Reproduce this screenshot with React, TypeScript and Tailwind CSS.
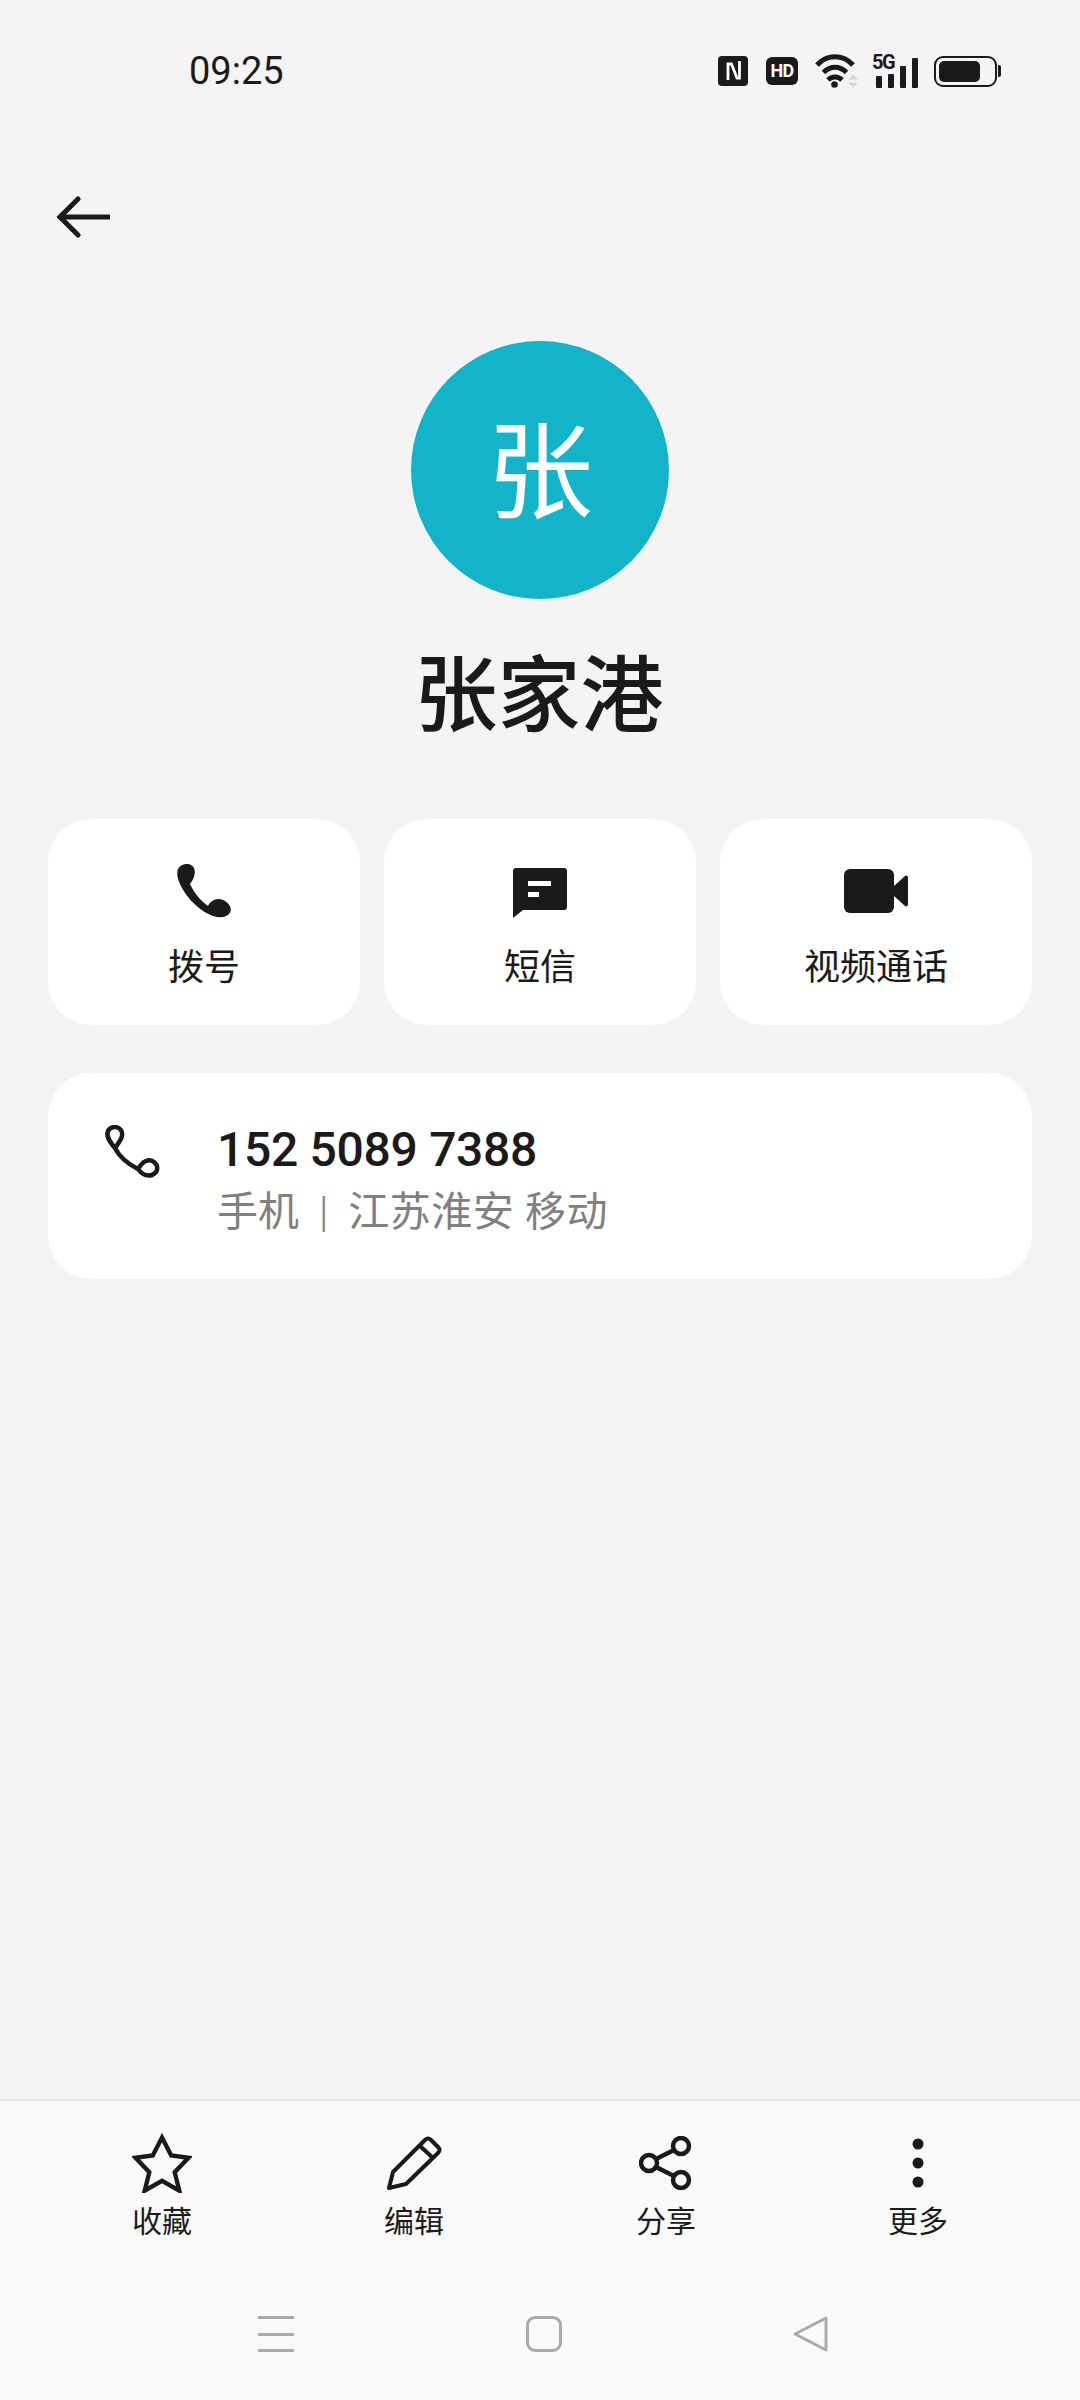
import React from "react";

const font = { fontFamily: 'Roboto, "Noto Sans CJK SC", sans-serif' };

function StatusIcons() {
  return (
    <div className="flex items-center">
      {/* NFC */}
      <svg width="30" height="30" viewBox="0 0 30 30">
        <rect width="30" height="30" rx="4" fill="#1a1a1a" />
        <path d="M10 24V8h3.500l5.500 14h2.500V5" fill="none" stroke="#fff" strokeWidth="2.800" />
      </svg>
      {/* HD */}
      <div className="ml-[18px] flex h-[28px] w-[32px] items-center justify-center rounded-[6px] bg-[#1a1a1a] text-[18px] font-bold leading-none tracking-[-0.8px] text-white">
        HD
      </div>
      {/* wifi */}
      <svg width="44" height="35" viewBox="0 0 44 35" className="ml-[16px]">
        <path d="M3 11c10-11 26-11 36 0" fill="none" stroke="#1a1a1a" strokeWidth="5" />
        <path d="M9.500 18.500c7-7 16-7 23 0" fill="none" stroke="#1a1a1a" strokeWidth="5" />
        <path d="M14 26c4-4 10-4 14 0" fill="none" stroke="#1a1a1a" strokeWidth="5" />
        <circle cx="20.500" cy="30.500" r="3.300" fill="#1a1a1a" />
        <path d="M39 20l5 5.500H34zM39 34l5-5.500H34z" fill="#d8d8d8" />
      </svg>
      {/* 5G + signal */}
      <div className="relative ml-[14px] h-[34px] w-[47px]">
        <span className="absolute left-0 top-[-2px] text-[20px] font-bold leading-[20px] tracking-[-1.500px] text-[#1a1a1a]">
          5G
        </span>
        <div className="absolute bottom-0 left-[4px] flex items-end gap-[6px]">
          <div className="h-[12px] w-[6px] rounded-[1px] bg-[#1a1a1a]" />
          <div className="h-[14px] w-[6px] rounded-[1px] bg-[#1a1a1a]" />
          <div className="h-[22px] w-[6px] rounded-[1px] bg-[#1a1a1a]" />
          <div className="h-[30px] w-[6px] rounded-[1px] bg-[#1a1a1a]" />
        </div>
      </div>
      {/* battery */}
      <div className="ml-[15px] flex items-center">
        <div className="h-[31px] w-[63px] rounded-[9px] border-[2.5px] border-[#1a1a1a] p-[3px]">
          <div className="h-full w-[41px] rounded-[5px] bg-[#1a1a1a]" />
        </div>
        <div className="ml-[1px] h-[12px] w-[3px] rounded-r-[2px] bg-[#1a1a1a]" />
      </div>
    </div>
  );
}

function QuickAction({ icon, label }: { icon: React.ReactNode; label: string }) {
  return (
    <div className="flex h-[206px] flex-col items-center rounded-[44px] bg-white">
      <div className="mt-[44px] flex h-[56px] items-center justify-center">{icon}</div>
      <div className="mt-[28px] text-[36px] leading-[42px] text-[#1a1a1a]">{label}</div>
    </div>
  );
}

function BottomAction({ icon, label }: { icon: React.ReactNode; label: string }) {
  return (
    <div className="flex flex-col items-center">
      <div className="flex h-[58px] items-center justify-center">{icon}</div>
      <div className="mt-[12px] text-[30px] leading-[36px] text-[#1a1a1a]">{label}</div>
    </div>
  );
}

export default function App() {
  return (
    <div className="flex h-[2400px] w-[1080px] flex-col bg-[#f4f4f4]" style={font}>
      {/* Status bar */}
      <div className="flex h-[142px] items-center justify-between pl-[189px] pr-[79px]">
        <span className="text-[38px] leading-none text-[#1a1a1a]">09:25</span>
        <StatusIcons />
      </div>

      {/* Back */}
      <div className="flex h-[150px] items-center pl-[56px]">
        <svg width="56" height="42" viewBox="0 0 56 42" fill="none" stroke="#1a1a1a" strokeWidth="5" strokeLinecap="round">
          <path d="M54 21H4" strokeLinecap="butt" />
          <path d="M22 3L4 21l18 18" />
        </svg>
      </div>

      {/* Avatar + name */}
      <div className="mt-[49px] flex flex-col items-center">
        <div className="flex h-[258px] w-[258px] items-center justify-center rounded-full bg-[#14b4c8] pt-[8px] text-[106px] leading-none text-white">
          张
        </div>
        <div className="mt-[50px] mr-[2px] text-[83px] font-medium leading-[96px] text-[#1a1a1a]">张家港</div>
      </div>

      {/* Quick actions */}
      <div className="mt-[74px] grid grid-cols-3 gap-[24px] px-[48px]">
        <QuickAction
          label="拨号"
          icon={
            <svg width="55" height="54" viewBox="0 0 55 54">
              <path
                d="M1 5C4-1 14-2 17 4c2 5 0 11-4 16 4 9 11 17 18 22 2-5 9-9 15-6 7 3 10 10 6 14-4 4-10 4-16 2C20 46 6 30 1 15c-1-4-1-7 0-10z"
                fill="#1a1a1a"
              />
            </svg>
          }
        />
        <QuickAction
          label="短信"
          icon={
            <svg width="54" height="50" viewBox="0 0 54 50" className="mt-[4px]">
              <path d="M3 0h48a3 3 0 0 1 3 3v36a3 3 0 0 1-3 3H10l-10 8V3a3 3 0 0 1 3-3z" fill="#1a1a1a" />
              <rect x="15" y="13" width="23" height="5" fill="#fff" />
              <rect x="15" y="24" width="11" height="5" fill="#fff" />
            </svg>
          }
        />
        <QuickAction
          label="视频通话"
          icon={
            <svg width="64" height="44" viewBox="0 0 64 44">
              <rect width="50" height="44" rx="6" fill="#1a1a1a" />
              <path d="M50 17l11-10c2-1 3 0 3 2v26c0 2-1 3-3 2L50 27z" fill="#1a1a1a" />
            </svg>
          }
        />
      </div>

      {/* Number card */}
      <div className="mx-[48px] mt-[48px] flex h-[206px] rounded-[44px] bg-white">
        <svg width="56" height="54" viewBox="0 0 56 54" fill="none" className="ml-[57px] mt-[52px] shrink-0">
          <path
            d="M10 23C4 16 1 11 3 6c3-5 10-5 13-1 3 5 0 10-6 18 4 8 13 16 23 21 5-8 11-11 16-7 5 4 4 11-2 13-6 2-11-2-14-6"
            stroke="#1a1a1a"
            strokeWidth="4.500"
            strokeLinejoin="round"
          />
        </svg>
        <div className="ml-[56px] mt-[49px]">
          <div className="text-[48px] font-medium leading-[56px] tracking-[-0.3px] text-[#1a1a1a]">152 5089 7388</div>
          <div className="mt-[9px] flex items-center text-[41px] leading-[50px] text-[#808080]">
            <span>手机</span>
            <span className="mx-[20px] text-[42px] font-light">|</span>
            <span className="tracking-[0.5px]">江苏淮安 移动</span>
          </div>
        </div>
      </div>

      <div className="flex-1" />

      {/* Bottom bar */}
      <div className="h-[301px] border-t-2 border-[#e6e6e6] bg-[#fafafa]">
        <div className="mt-[33px] grid grid-cols-4 px-[36px]">
          <BottomAction
            label="收藏"
            icon={
              <svg width="60" height="60" viewBox="3 2 52 52" fill="none" stroke="#1a1a1a" strokeWidth="3.800" strokeMiterlimit="10">
                <path d="M29 6l8 15.500 15 2-12 12.500 4 16-15-8.500L14 52l4-16L6 23.500l15-2z" />
              </svg>
            }
          />
          <BottomAction
            label="编辑"
            icon={
              <svg width="56" height="56" viewBox="0 0 56 56" fill="none" stroke="#1a1a1a" strokeWidth="4" strokeLinejoin="round">
                <path d="M3 53l4-16L39 5q3-3 6 0l7 7q3 3 0 6L20 49z" />
                <path d="M33 10l14 13" />
              </svg>
            }
          />
          <BottomAction
            label="分享"
            icon={
              <svg width="54" height="54" viewBox="0 0 54 54" fill="none" stroke="#1a1a1a" strokeWidth="4.500">
                <circle cx="42" cy="10" r="8" />
                <circle cx="10" cy="27" r="8" />
                <circle cx="42" cy="44" r="8" />
                <path d="M17 23l18-9M17 31l18 9" />
              </svg>
            }
          />
          <BottomAction
            label="更多"
            icon={
              <svg width="12" height="50" viewBox="0 0 12 50" fill="#1a1a1a">
                <circle cx="6" cy="6" r="5.500" />
                <circle cx="6" cy="25" r="5.500" />
                <circle cx="6" cy="44" r="5.500" />
              </svg>
            }
          />
        </div>

        {/* Nav bar */}
        <div className="mt-[76px] flex h-[36px] items-center pl-[258px]">
          <div className="flex h-[36px] w-[36px] flex-col justify-between">
            <div className="h-[3px] bg-[#aaaaaa]" />
            <div className="h-[3px] bg-[#aaaaaa]" />
            <div className="h-[3px] bg-[#aaaaaa]" />
          </div>
          <div className="ml-[232px] h-[36px] w-[36px] rounded-[9px] border-[3px] border-[#aaaaaa]" />
          <svg width="36" height="36" viewBox="0 0 36 36" fill="none" stroke="#aaaaaa" strokeWidth="3" strokeLinejoin="round" className="ml-[231px]">
            <path d="M33 2v32L2 18z" />
          </svg>
        </div>
      </div>
    </div>
  );
}
